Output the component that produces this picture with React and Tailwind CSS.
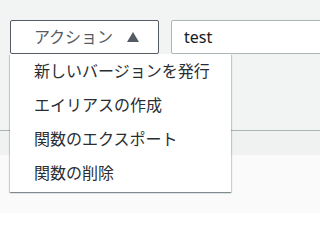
export default function App() {
  const items = ['新しいバージョンを発行', 'エイリアスの作成', '関数のエクスポート', '関数の削除']

  return (
    <div className="relative h-[213px] w-full overflow-hidden bg-[#fafafa] font-['Noto_Sans','Noto_Sans_CJK_JP',sans-serif]">
      <div className="flex h-[131px] items-start gap-3 border-b border-[#aab7b8] bg-[#f2f3f3] pl-[10px] pt-5">
        <div className="relative">
          <button className="flex h-[34px] w-[149px] items-center justify-center gap-[14px] rounded-[2px] border border-[#545b64] bg-white pl-1 text-[16px] text-[#545b64]">
            <span>アクション</span>
            <svg width="12" height="10" viewBox="0 0 12 10">
              <path d="M6 0 L12 10 L0 10 Z" fill="#545b64" />
            </svg>
          </button>
          {/* dropdown */}
          <ul className="absolute left-0 top-full z-10 w-[221px] bg-white pb-[2px] shadow-[0_1px_1px_0_rgba(0,28,36,0.3),1px_1px_1px_0_rgba(0,28,36,0.15),-1px_1px_1px_0_rgba(0,28,36,0.15)]">
            {items.map(item => (
              <li key={item} className="flex h-[34px] items-center whitespace-nowrap pl-6 text-[16px] text-[#2a2e33]">
                {item}
              </li>
            ))}
          </ul>
        </div>
        <input
          defaultValue="test"
          className="h-[34px] w-[160px] shrink-0 rounded-[2px] border border-[#aab7b8] bg-white pl-3 text-[16px] text-[#16191f] outline-none"
        />
      </div>
      <div className="h-[24px] bg-[#f0f2f2]" />
    </div>
  )
}
